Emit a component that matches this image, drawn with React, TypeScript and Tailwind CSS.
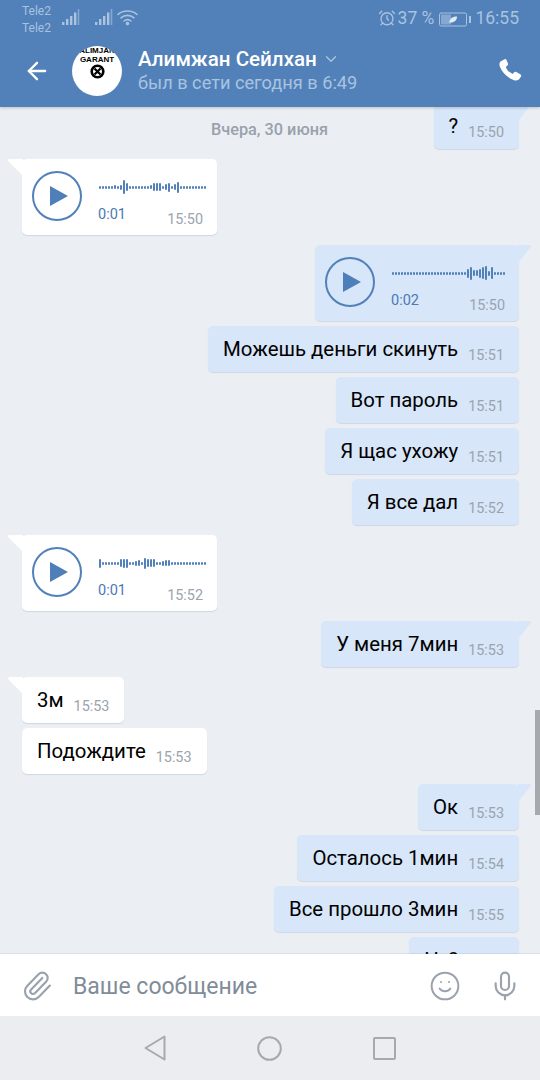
import { AlarmClock, ArrowLeft, ChevronDown, Mic, Paperclip, Smile } from "lucide-react"

const wave1 = [3,3,3,3,3,4,3,5,14,8,3,3,3,3,3,3,3,4,8,8,8,3,6,9,3,6,11,3,3,3,3,3,3,3,3,3]
const wave2 = [3,3,3,3,3,3,3,3,3,3,3,3,3,3,3,3,3,3,3,3,3,3,3,3,3,9,13,6,6,9,12,14,5,12,3,3,3,3]
const wave3 = [9,3,3,3,3,3,3,8,9,9,3,3,5,6,3,11,8,8,8,3,3,5,6,6,3,3,3,3,3,3,3,3,3,3,3,3]

function Tail({ side }: { side: "left" | "right" }) {
  if (side === "left") {
    return (
      <svg className="absolute left-[-14px] top-0" width="15" height="20" viewBox="0 0 15 20">
        <path d="M15 0H2C0 0 -.5 1.5 .8 2.8L12 14C14 16 14.5 18 15 20Z" fill="#fff" />
      </svg>
    )
  }
  return (
    <svg className="absolute right-[-12px] top-0" width="13" height="20" viewBox="0 0 13 20">
      <path d="M0 0H11C13 0 13.3 1.2 12.2 2.6L4 13C2 15.5 1 18 0 20Z" fill="#d7e6f9" />
    </svg>
  )
}

function Wave({ bars }: { bars: number[] }) {
  return (
    <svg width={bars.length * 3} height="16" viewBox={`0 0 ${bars.length * 3} 16`}>
      {bars.map((h, i) => (
        <rect key={i} x={i * 3} y={Math.round(8 - h / 2)} width="2" height={h} rx="1" fill="#5181b8" />
      ))}
    </svg>
  )
}

function TextBubble({ text, time, mine, tail, className }: { text: string; time: string; mine?: boolean; tail?: boolean; className?: string }) {
  return (
    <div className={`relative flex h-[46px] shrink-0 items-start rounded-[5px] px-[15px] shadow-[0_1px_1px_rgba(80,110,150,0.18)] ${mine ? "self-end bg-[#d7e6f9]" : "self-start bg-white"} ${className ?? ""}`}>
      {tail && <Tail side={mine ? "right" : "left"} />}
      <span className="mt-[11px] text-[20.4px] leading-[24px] text-black">{text}</span>
      <span className="ml-[10px] mt-[21px] text-[14.4px] leading-[18px] text-[#9aa3ad]">{time}</span>
    </div>
  )
}

function AudioBubble({ bars, dur, time, mine, className }: { bars: number[]; dur: string; time: string; mine?: boolean; className?: string }) {
  return (
    <div className={`relative flex h-[76px] shrink-0 rounded-[5px] pl-[10px] shadow-[0_1px_1px_rgba(80,110,150,0.18)] ${mine ? "w-[204px] self-end bg-[#d7e6f9]" : "w-[195px] self-start bg-white"} ${className ?? ""}`}>
      <Tail side={mine ? "right" : "left"} />
      <div className="mt-[12px] flex h-[50px] w-[50px] shrink-0 items-center justify-center rounded-full border-2 border-[#5181b8]">
        <svg width="18" height="20" viewBox="0 0 18 20" className="ml-[4px]"><path d="M0 0L18 10L0 20Z" fill="#4f7fb8" /></svg>
      </div>
      <div className="ml-[16px] flex flex-1 flex-col">
        <div className="ml-[1px] mt-[20px] h-[16px]"><Wave bars={bars} /></div>
        <div className="mt-[11px] flex items-start justify-between pr-[14px]">
          <span className="text-[14.5px] leading-[18px] text-[#4a7ab3]">{dur}</span>
          <span className="mt-[5px] text-[14.4px] leading-[18px] text-[#9aa3ad]">{time}</span>
        </div>
      </div>
    </div>
  )
}

function Signal({ className }: { className?: string }) {
  return (
    <svg className={className} width="18" height="17" viewBox="0 0 18 17" fill="#a9c3e0">
      <rect x="0" y="13" width="2.4" height="3" />
      <rect x="4" y="10" width="2.4" height="6" />
      <rect x="8" y="7" width="2.4" height="9" />
      <rect x="12" y="3.5" width="2.4" height="12.5" />
      <rect x="15.7" y="0" width="1.6" height="16" opacity="0.6" />
    </svg>
  )
}

export default function App() {
  return (
    <div className="flex h-[1080px] w-[540px] flex-col overflow-hidden bg-[#ebeff4] font-['Roboto',sans-serif]">
      <header className="relative z-10 h-[107px] shrink-0 bg-[#5181b8] shadow-[0_1px_3px_rgba(0,0,0,0.2)]">
        <div className="flex h-[34px] items-start pl-[22px] pr-[21px] text-[#a9c3e0]">
          <div className="mt-[4px] flex flex-col text-[12px] leading-[15px]">
            <span>Tele2</span>
            <span className="mt-[2px]">Tele2</span>
          </div>
          <Signal className="ml-[11px] mt-[9px]" />
          <Signal className="ml-[15px] mt-[9px]" />
          <svg className="ml-[4px] mt-[9px]" width="21" height="17" viewBox="0 0 21 17" fill="none" stroke="#a9c3e0" strokeWidth="1.6" strokeLinecap="round">
            <path d="M1 5.5C6 .8 15 .8 20 5.5" />
            <path d="M4 8.8C7.5 5.5 13.5 5.5 17 8.8" />
            <path d="M7 12C9 10.4 12 10.4 14 12" />
            <circle cx="10.5" cy="14.6" r="1" fill="#a9c3e0" />
          </svg>
          <div className="ml-auto flex items-center">
            <AlarmClock className="mt-[8px]" size={18} strokeWidth={1.8} />
            <span className="ml-[2px] mt-[8px] text-[17.5px] leading-[20px]">37 %</span>
            <svg className="ml-[5px] mt-[10px]" width="33" height="15" viewBox="0 0 33 15">
              <rect x=".5" y="1" width="27" height="13" rx="1.5" fill="none" stroke="#a9c3e0" />
              <rect x="2" y="2.5" width="10" height="10" fill="#a9c3e0" opacity="0.6" />
              <path d="M10 10.5C11 6 14 4.5 18 4.5C18 8.5 15 11 10 10.5Z" fill="#dfeaf6" />
              <rect x="30" y="4" width="2" height="7" fill="#a9c3e0" />
            </svg>
            <span className="ml-[3px] mt-[8px] text-[17.5px] leading-[20px]">16:55</span>
          </div>
        </div>
        <div className="flex h-[73px] items-start">
          <ArrowLeft className="ml-[23px] mt-[23px]" size={28} color="#fff" strokeWidth={2} />
          <div className="ml-[21px] mt-[12px] flex h-[50px] w-[50px] shrink-0 flex-col items-center overflow-hidden rounded-full bg-white font-['Liberation_Sans',sans-serif] text-[8px] font-black leading-[8.5px] text-black">
            <span className="mt-[1px] whitespace-nowrap">ALIMJAN</span>
            <span className="whitespace-nowrap">GARANT</span>
            <svg width="15" height="15" viewBox="0 0 15 15" fill="none" stroke="#000">
              <circle cx="7.5" cy="7.5" r="5.8" strokeWidth="2.6" />
              <path d="M4.5 4.5L10.5 10.5M10.5 4.5L4.5 10.5" strokeWidth="2.2" />
            </svg>
          </div>
          <div className="ml-[16px] mt-[12px] flex flex-col">
            <div className="flex items-center">
              <span className="text-[20.6px] font-medium leading-[26px] text-white">Алимжан Сейлхан</span>
              <ChevronDown className="ml-[5px]" size={18} color="#a9c3e0" strokeWidth={1.8} />
            </div>
            <span className="mt-[-1px] text-[18.2px] leading-[24px] text-[#a9c3e0]">был в сети сегодня в 6:49</span>
          </div>
          <svg className="ml-auto mr-[18px] mt-[24px]" width="24" height="24" viewBox="0 0 24 24">
            <path d="M6.5 1.3L3 3.2C1.3 4.4 1 6.5 2 9C4.6 15 9.5 19.6 15.5 22C18 23 20.3 22.5 21.5 20.8L23 18.5C23.5 17.6 23.2 16.7 22.3 16.2L18.3 14C17.4 13.5 16.5 13.7 15.9 14.5L14.7 16C10.9 14.2 9.2 12.2 7.8 8.9L9.4 7.6C10.1 7 10.3 6.1 9.9 5.3L8.5 2C8.1 1.1 7.3 .9 6.5 1.3Z" fill="#fff" />
          </svg>
        </div>
      </header>

      <main className="relative -mt-[4px] flex min-h-0 flex-1 flex-col overflow-hidden pl-[22px] pr-[21px]">
        <span className="absolute left-[211px] top-[18px] text-[16.3px] font-medium leading-[18px] text-[#99a1ab]">Вчера, 30 июня</span>
        <TextBubble text="?" time="15:50" mine tail />
        <AudioBubble className="mt-[10px]" bars={wave1} dur="0:01" time="15:50" />
        <AudioBubble className="mt-[10px]" bars={wave2} dur="0:02" time="15:50" mine />
        <TextBubble className="mt-[5px]" text="Можешь деньги скинуть" time="15:51" mine />
        <TextBubble className="mt-[5px]" text="Вот пароль" time="15:51" mine />
        <TextBubble className="mt-[5px]" text="Я щас ухожу" time="15:51" mine />
        <TextBubble className="mt-[5px]" text="Я все дал" time="15:52" mine />
        <AudioBubble className="mt-[10px]" bars={wave3} dur="0:01" time="15:52" />
        <TextBubble className="mt-[10px]" text="У меня 7мин" time="15:53" mine tail />
        <TextBubble className="mt-[10px]" text="3м" time="15:53" tail />
        <TextBubble className="mt-[5px]" text="Подождите" time="15:53" />
        <TextBubble className="mt-[10px]" text="Ок" time="15:53" mine tail />
        <TextBubble className="mt-[5px]" text="Осталось 1мин" time="15:54" mine />
        <TextBubble className="mt-[5px]" text="Все прошло 3мин" time="15:55" mine />
        <TextBubble className="mt-[5px]" text="Ну?" time="15:55" mine />
        <div className="absolute right-0 top-[607px] h-[105px] w-[5px] bg-[#a6a9ae]" />
      </main>

      <div className="relative z-10 flex h-[62px] shrink-0 items-center bg-white pl-[21px] pr-[19px] pt-[2px] shadow-[0_-1px_0_rgba(0,0,0,0.06)]">
        <Paperclip size={32} color="#99a2ad" strokeWidth={1.6} />
        <span className="ml-[20px] mt-[2px] text-[23px] leading-[30px] text-[#818c99]">Ваше сообщение</span>
        <Smile className="ml-auto" size={32} color="#99a2ad" strokeWidth={1.5} />
        <Mic className="ml-[28px]" size={32} color="#99a2ad" strokeWidth={1.6} />
      </div>

      <nav className="flex h-[64px] shrink-0 items-center justify-center gap-[91px] bg-[#ebedf0]">
        <svg width="22" height="26" viewBox="0 0 22 26" fill="none" stroke="#a6a9ae" strokeWidth="2" strokeLinejoin="round"><path d="M20.5 1.5V24.5L1.5 13Z" /></svg>
        <svg width="25" height="25" viewBox="0 0 25 25" fill="none" stroke="#a6a9ae" strokeWidth="2"><circle cx="12.5" cy="12.5" r="11.3" /></svg>
        <svg width="23" height="23" viewBox="0 0 23 23" fill="none" stroke="#a6a9ae" strokeWidth="2" strokeLinejoin="round"><rect x="1" y="1" width="21" height="21" rx="1" /></svg>
      </nav>
    </div>
  )
}
